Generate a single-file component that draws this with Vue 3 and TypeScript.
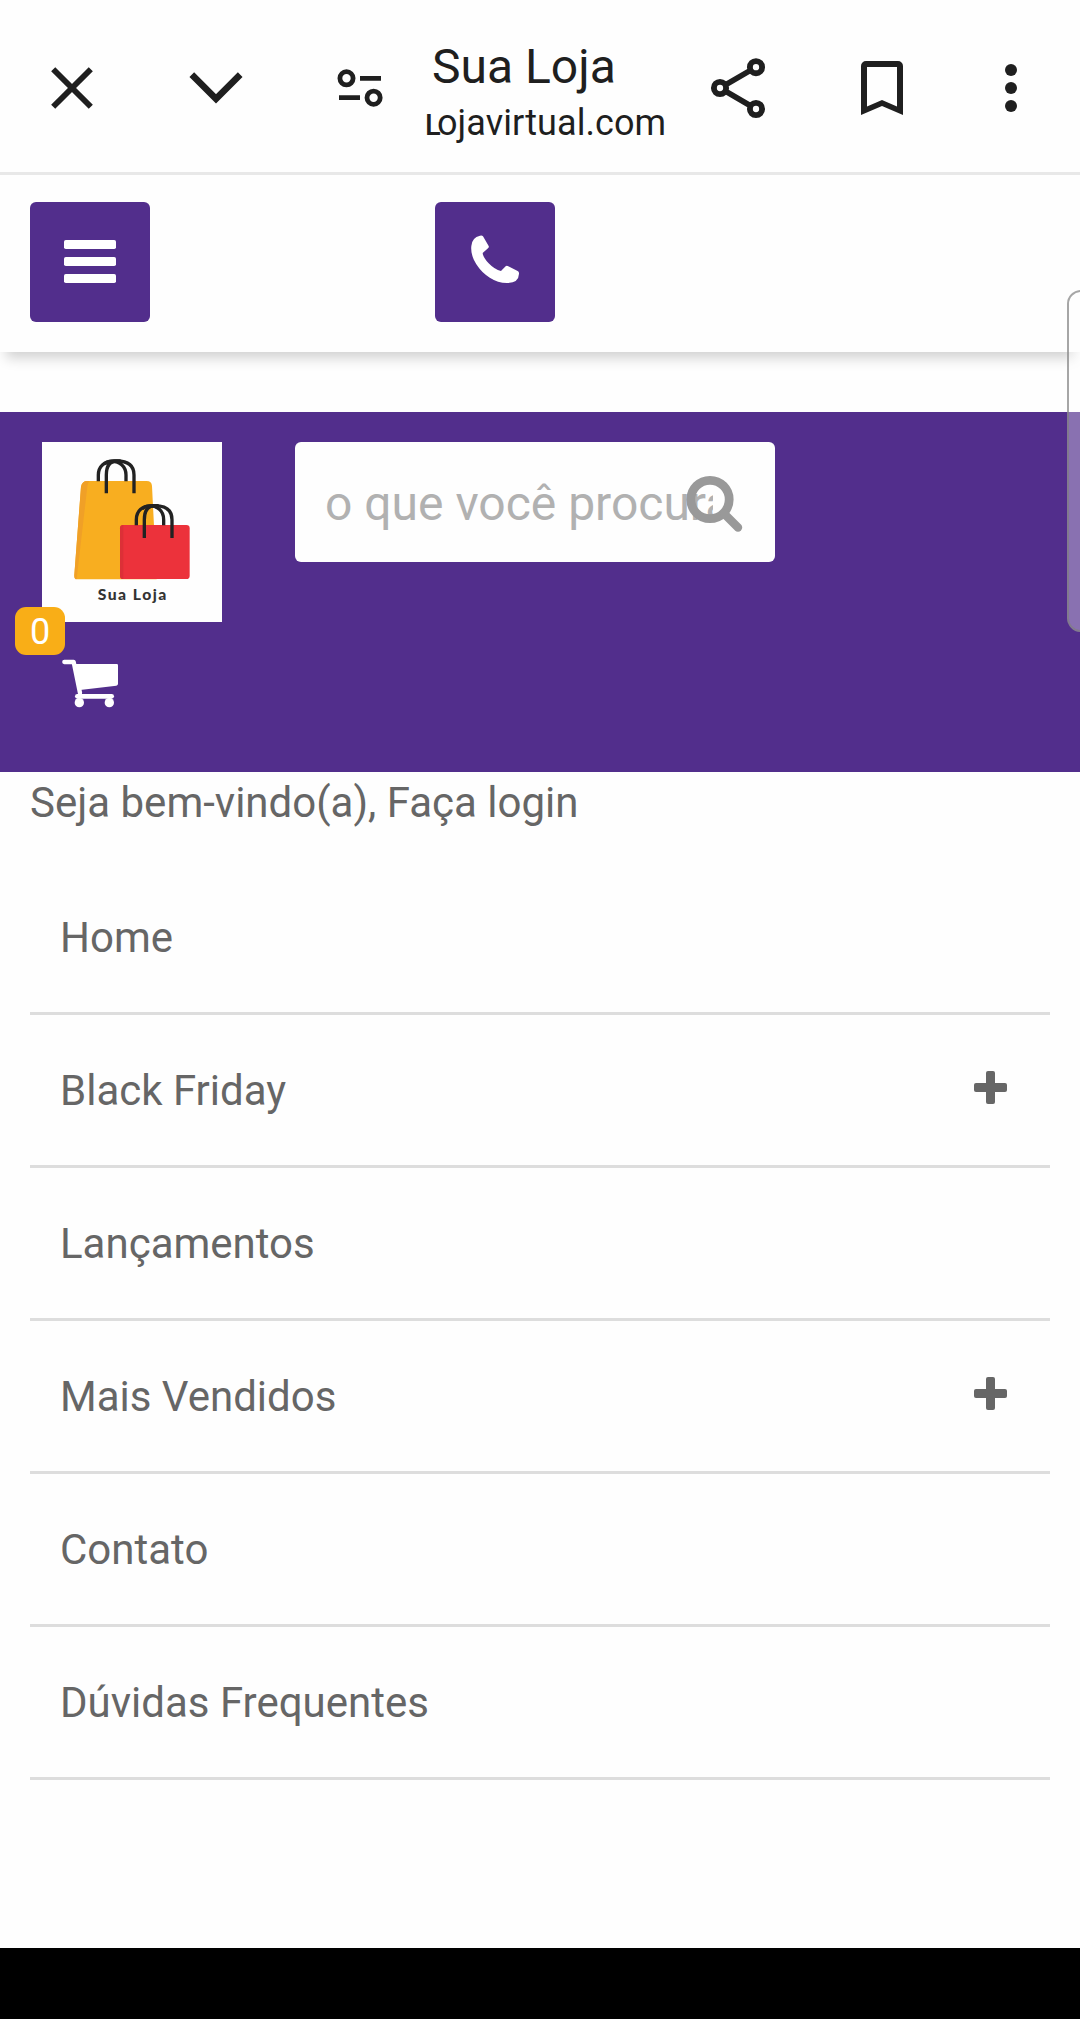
<script setup lang="ts">
interface MenuItem {
  label: string
  expandable: boolean
}

const cartCount = 0

const menu: MenuItem[] = [
  { label: 'Home', expandable: false },
  { label: 'Black Friday', expandable: true },
  { label: 'Lançamentos', expandable: false },
  { label: 'Mais Vendidos', expandable: true },
  { label: 'Contato', expandable: false },
  { label: 'Dúvidas Frequentes', expandable: false },
]
</script>

<template>
  <div class="screen">
    <header class="browser-bar">
      <span class="cell">
        <svg width="48" height="48" viewBox="0 0 48 48" fill="none" stroke="#1f1f1f" stroke-width="5.8">
          <path d="M5.2 5.2 42.8 42.8M42.8 5.2 5.2 42.8" />
        </svg>
      </span>
      <span class="cell">
        <svg width="56" height="48" viewBox="0 0 56 48" fill="none" stroke="#1f1f1f" stroke-width="6.6">
          <path d="M3.8 10.6 28 34.8 52.2 10.6" />
        </svg>
      </span>
      <span class="cell tune">
        <svg width="48" height="48" viewBox="0 0 48 48" fill="none" stroke="#1f1f1f" stroke-width="4.8">
          <circle cx="10.5" cy="14.3" r="6.6" />
          <path d="M24 14.3H45M3 33.7H24" />
          <circle cx="37.6" cy="33.7" r="6.6" />
        </svg>
      </span>
      <div class="page-id">
        <div class="title">Sua Loja</div>
        <div class="domain"><span class="initial">L</span>ojavirtual.com</div>
      </div>
      <span class="cell">
        <svg width="60" height="64" viewBox="0 0 60 64" fill="none" stroke="#1f1f1f" stroke-width="5.9">
          <path d="M48 11.2 12 32 48 53" stroke-width="5.6" />
          <g fill="#fefefe">
            <circle cx="48" cy="11.2" r="6.1" />
            <circle cx="12" cy="32" r="6.1" />
            <circle cx="48" cy="53" r="6.1" />
          </g>
        </svg>
      </span>
      <span class="cell">
        <svg width="42" height="54" viewBox="0 0 42 54" fill="#1f1f1f" fill-rule="evenodd">
          <path d="M0 54V5a5 5 0 0 1 5-5H37a5 5 0 0 1 5 5V54L21 45ZM6 6V45.6L21 39 36 45.6V6Z" />
        </svg>
      </span>
      <span class="cell more">
        <svg width="12" height="48" viewBox="0 0 12 48" fill="#1f1f1f">
          <circle cx="6" cy="6" r="6" />
          <circle cx="6" cy="24" r="6" />
          <circle cx="6" cy="42" r="6" />
        </svg>
      </span>
    </header>

    <nav class="toolbar">
      <button class="square burger" aria-label="Menu">
        <svg width="52" height="43" viewBox="0 0 52 43" fill="#fff">
          <rect width="52" height="9" rx="1.8" />
          <rect y="17" width="52" height="9" rx="1.8" />
          <rect y="34" width="52" height="9" rx="1.8" />
        </svg>
      </button>
      <button class="square phone" aria-label="Telefone">
        <svg width="48.3" height="48.3" viewBox="213 165 145 145" fill="#fff">
          <path
            d="M240 167Q246 165 249 169L266 198Q268 202 264 205L248 219Q249 232 266 250Q284 269 303 273L317 259Q320 256 325 259L353 273Q358 276 357 282Q356 309 321 309C285 309 250 285 230 254C218 236 212 217 214 198Q216 172 240 167Z"
          />
        </svg>
      </button>
    </nav>

    <section class="store-header">
      <div class="brand-row">
        <svg class="logo" width="180" height="180" viewBox="126 66 540 540">
          <rect x="126" y="66" width="540" height="540" fill="#fefefe" />
          <path
            d="M262 183H440Q455 183 456 198L470 478H232Q222 478 223 465L243 200Q246 183 262 183Z"
            fill="#f8ae20"
          />
          <path d="M262 183Q246 183 243 200L223 465Q222 478 230 478L262 200Q263 188 268 183Z" fill="#f0a027" />
          <rect x="360" y="315" width="209" height="162" rx="10" fill="#ec323b" />
          <path d="M370 315Q360 315 360 325V467Q360 477 370 477Z" fill="#dc3037" />
          <g fill="none" stroke="#222" stroke-width="10">
            <path d="M295 184V165C295 110 378 110 378 165V184" />
            <path d="M319 220V165Q319 124 350 123Q402 123 402 165V220" />
            <path d="M313 132Q325 123 345 123H362" />
            <path d="M409 316V299C409 244 491 244 491 299V316" />
            <path d="M433 354V299Q433 258 464 257Q516 257 516 299V354" />
            <path d="M427 266Q439 257 459 257H476" />
          </g>
          <text x="293" y="541" textLength="206" lengthAdjust="spacing" class="logo-text">Sua Loja</text>
        </svg>
        <div class="search">
          <div class="placeholder">o que você procura?</div>
          <svg class="lens" width="58" height="58" viewBox="0 0 58 58" fill="none" stroke="#999">
            <circle cx="24" cy="24.5" r="19.2" stroke-width="8.8" />
            <path d="M38 38.5 52 52.5" stroke-width="8.4" stroke-linecap="round" />
          </svg>
        </div>
      </div>
      <a class="cart">
        <span class="badge">{{ cartCount }}</span>
        <svg width="56" height="49" viewBox="186 718 168 147" fill="#fff">
          <path
            d="M193 727H221L240 820"
            fill="none"
            stroke="#fff"
            stroke-width="13"
            stroke-linecap="round"
            stroke-linejoin="round"
          />
          <path d="M221 733H350Q354 733 354 737V792Q354 797 349 798L240 811Z" />
          <rect x="225" y="823" width="117" height="14" rx="7" />
          <circle cx="238" cy="849" r="14" />
          <circle cx="328" cy="849" r="14" />
        </svg>
      </a>
    </section>

    <p class="welcome">Seja bem-vindo(a), Faça login</p>

    <ul class="menu">
      <li v-for="item in menu" :key="item.label">
        <span>{{ item.label }}</span>
        <svg v-if="item.expandable" width="33" height="33" viewBox="0 0 33 33" fill="#666">
          <rect x="12" width="9" height="33" rx="2" />
          <rect y="12" width="33" height="9" rx="2" />
        </svg>
      </li>
    </ul>

    <div class="scroll-handle"></div>
    <footer class="system-bar"></footer>
  </div>
</template>

<style>
body {
  margin: 0;
}
</style>

<style scoped>
.screen {
  position: relative;
  display: flex;
  flex-direction: column;
  width: 1080px;
  height: 2019px;
  overflow: hidden;
  background: #fefefe;
  color: #666;
  font-family: Roboto, sans-serif;
}
svg {
  display: block;
  flex: none;
}
.browser-bar {
  display: flex;
  height: 172px;
  border-bottom: 3px solid #e8e8e8;
  color: #1f1f1f;
}
.cell {
  display: flex;
  flex: none;
  align-items: center;
  justify-content: center;
  box-sizing: border-box;
  width: 144px;
  padding-top: 4px;
}
.more {
  width: 126px;
  padding-right: 12px;
}
.page-id {
  flex: none;
  box-sizing: border-box;
  width: 234px;
  padding-top: 39px;
  margin-left: -9px;
  padding-left: 2px;
  margin-right: 9px;
  white-space: nowrap;
}
.title {
  padding-left: 7px;
  font-size: 48px;
  line-height: 56px;
}
.domain {
  font-size: 36px;
  line-height: 56px;
  letter-spacing: 0.08px;
}
.initial {
  display: inline-block;
  width: 12px;
  font-size: 29px;
  font-weight: 500;
}
.toolbar {
  position: relative;
  display: flex;
  gap: 285px;
  box-sizing: border-box;
  height: 177px;
  padding: 27px 30px 30px;
  background: #fefefe;
  box-shadow: 0 12px 12px -6px rgba(0, 0, 0, 0.18);
}
.square {
  display: flex;
  align-items: center;
  justify-content: center;
  box-sizing: border-box;
  width: 120px;
  height: 120px;
  padding: 0;
  border: 0;
  border-radius: 6px;
  background: #522e8c;
}
.burger {
  padding-bottom: 1px;
}
.phone {
  padding-bottom: 5px;
}
.store-header {
  box-sizing: border-box;
  height: 360px;
  margin-top: 60px;
  padding: 30px 42px 0;
  background: #522e8c;
}
.brand-row {
  display: flex;
  align-items: flex-start;
  gap: 73px;
}
.logo-text {
  font-family: Lato, sans-serif;
  font-size: 47px;
  font-weight: 900;
  fill: #333;
}
.search {
  position: relative;
  box-sizing: border-box;
  width: 480px;
  height: 120px;
  padding: 0 62px 0 30px;
  border-radius: 6px;
  background: #fefefe;
}
.placeholder {
  overflow: hidden;
  box-sizing: border-box;
  height: 120px;
  padding-top: 3px;
  color: #b1b1b1;
  font-size: 48px;
  line-height: 117px;
  white-space: nowrap;
}
.lens {
  position: absolute;
  top: 33px;
  right: 31px;
}
.cart {
  position: relative;
  display: block;
  width: 56px;
  margin: 37px 0 0 20px;
}
.badge {
  position: absolute;
  top: -52px;
  left: -47px;
  width: 50px;
  height: 48px;
  border-radius: 11px;
  background: #f9ae17;
  color: #fff;
  font-size: 36px;
  line-height: 50px;
  text-align: center;
}
.welcome {
  margin: 0;
  padding: 1px 0 0 30px;
  font-size: 42px;
  line-height: 59px;
  height: 59px;
}
.menu {
  flex: 1;
  margin: 0;
  padding: 30px 30px 0;
  list-style: none;
}
.menu li {
  display: flex;
  align-items: center;
  justify-content: space-between;
  height: 150px;
  padding: 0 43.5px 0 30px;
  border-bottom: 3px solid #ddd;
  font-size: 42px;
}
.menu svg {
  margin-bottom: 5px;
}
.scroll-handle {
  position: absolute;
  top: 290px;
  right: -20px;
  box-sizing: border-box;
  width: 33px;
  height: 342px;
  border: 2px solid rgba(128, 128, 128, 0.7);
  border-radius: 14px;
  background: rgba(255, 255, 255, 0.32);
}
.system-bar {
  height: 71px;
  background: #000;
}
</style>
